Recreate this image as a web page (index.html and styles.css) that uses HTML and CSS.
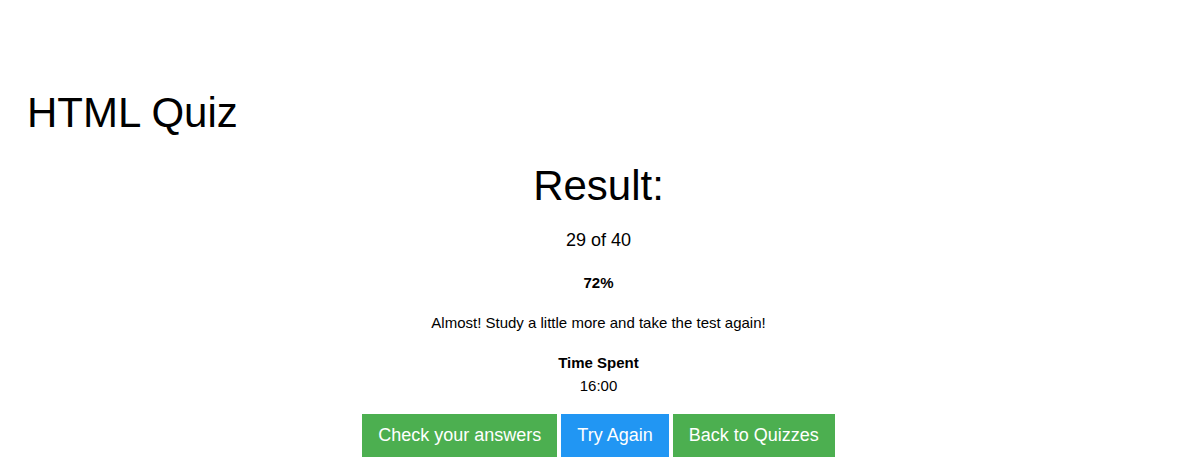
FILE: index.html
```html
<!DOCTYPE html>
<html lang="en">
<head>
<meta charset="utf-8">
<title>HTML Quiz</title>
<link rel="stylesheet" href="styles.css">
</head>
<body>
<div class="page">
  <h1 class="quiz-title">HTML Quiz</h1>
  <main class="result">
    <h1 class="result-title">Result:</h1>
    <p class="score">29 of 40</p>
    <p class="percent">72%</p>
    <p class="message">Almost! Study a little more and take the test again!</p>
    <div class="time">
      <div class="time-label">Time Spent</div>
      <div class="time-value">16:00</div>
    </div>
    <div class="actions">
      <a class="btn btn-green" href="#">Check your answers</a>
      <a class="btn btn-blue" href="#">Try Again</a>
      <a class="btn btn-green" href="#">Back to Quizzes</a>
    </div>
  </main>
</div>
</body>
</html>
```

FILE: styles.css
```css
html, body {
  margin: 0;
  padding: 0;
  background: #ffffff;
}

body {
  font-family: "Liberation Sans", Arial, sans-serif;
  font-size: 15px;
  line-height: 1.5;
  color: #000000;
}

.page {
  padding: 81px 18px 0 24px;
}

h1 {
  font-size: 42px;
  font-weight: normal;
  line-height: 1.5;
  margin: 0;
}

.quiz-title {
  padding-left: 3px;
}

.result {
  text-align: center;
  margin-top: 10px;
}

.score {
  font-size: 18px;
  margin: 10px 0 0;
}

.percent {
  font-weight: bold;
  margin: 18px 0 0;
}

.message {
  margin: 17px 0 0;
}

.time {
  margin-top: 18px;
}

.time-label {
  font-weight: bold;
}

.actions {
  display: flex;
  justify-content: center;
  gap: 4px;
  margin-top: 17px;
}

.btn {
  display: inline-block;
  font-size: 18px;
  line-height: 1.5;
  padding: 8px 16px;
  color: #ffffff;
  text-decoration: none;
  white-space: nowrap;
}

.btn-green {
  background: #4CAF50;
}

.btn-blue {
  background: #2196F3;
}
```
